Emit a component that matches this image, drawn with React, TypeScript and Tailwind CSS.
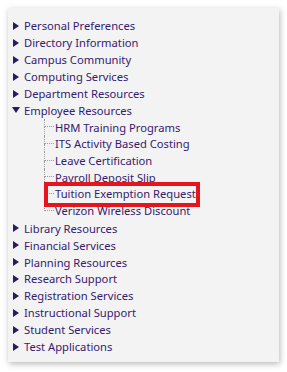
const topBefore = [
  'Personal Preferences',
  'Directory Information',
  'Campus Community',
  'Computing Services',
  'Department Resources',
];

const employeeItems = [
  'HRM Training Programs',
  'ITS Activity Based Costing',
  'Leave Certification',
  'Payroll Deposit Slip',
  'Tuition Exemption Request',
  'Verizon Wireless Discount',
];

const topAfter = [
  'Library Resources',
  'Financial Services',
  'Planning Resources',
  'Research Support',
  'Registration Services',
  'Instructional Support',
  'Student Services',
  'Test Applications',
];

const Arrow = ({ open }: { open?: boolean }) => {
  return (
    <svg width="8" height="8" viewBox="0 0 8 8" className="mr-[4px] shrink-0">
      {open ? (
        <polygon points="0,1 8,1 4,7" fill="#2b1a5c" />
      ) : (
        <polygon points="1,0 7,4 1,8" fill="#2b1a5c" />
      )}
    </svg>
  );
};

const TopItem = ({ label, open }: { label: string; open?: boolean }) => {
  return (
    <li className="flex items-center h-[16.9px] pl-[4px]">
      <Arrow open={open} />
      <span className="text-[#35206f] cursor-pointer">{label}</span>
    </li>
  );
};

const ChildItem = ({ label, last }: { label: string; last?: boolean }) => {
  return (
    <li className="flex items-stretch h-[16.7px]">
      <div className="flex flex-col w-[10px] shrink-0">
        <div className="h-1/2 border-l border-b border-dotted border-[#9a9a9a]" />
        <div className={last ? 'h-1/2' : 'h-1/2 border-l border-dotted border-[#9a9a9a]'} />
      </div>
      <span className="ml-[1px] self-center text-[#35206f] cursor-pointer">{label}</span>
    </li>
  );
};

export default function App() {
  return (
    <div className="w-[287px] h-[372px] bg-white p-2" style={{ fontFamily: '"Noto Sans", "Open Sans", sans-serif' }}>
      <div className="relative w-[271px] h-[354px] bg-[#f3f3f3] shadow-[1px_2px_6px_rgba(0,0,0,0.28)] pt-[9.5px] text-[11.2px] leading-none">
        <ul>
          {topBefore.map((t) => (
            <TopItem key={t} label={t} />
          ))}
          <TopItem label="Employee Resources" open />
          <li>
            <ul className="ml-[36px] pb-[1px]">
              {employeeItems.map((t, i) => (
                <ChildItem key={t} label={t} last={i === employeeItems.length - 1} />
              ))}
            </ul>
          </li>
          {topAfter.map((t) => (
            <TopItem key={t} label={t} />
          ))}
        </ul>
        <div className="absolute left-[36px] top-[174px] w-[156px] h-[25px] border-[4px] border-[#e5141d]" />
      </div>
    </div>
  );
}
